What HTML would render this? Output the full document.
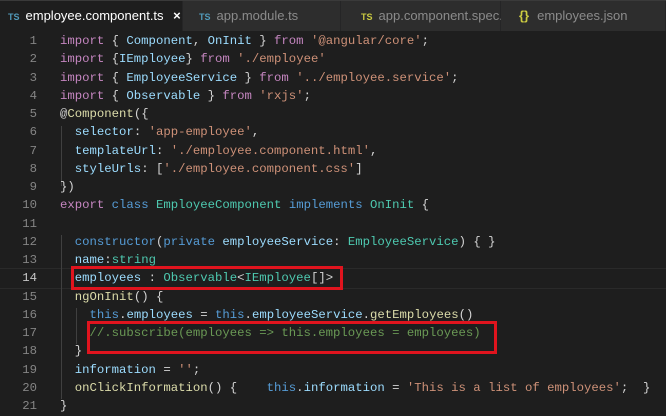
<!DOCTYPE html>
<html><head><meta charset="utf-8"><style>
body{margin:0;width:666px;height:416px;background:#1e1e1e;overflow:hidden;font-family:"Liberation Mono",monospace;}
.tabs{position:absolute;left:0;top:0;width:666px;height:31px;background:#252526;border-top:1px solid #3a3a3a;box-sizing:border-box;font-family:"Liberation Sans",sans-serif;font-size:13px;}
.tab{position:absolute;top:0;height:30px;line-height:30px;color:#8b8b8b;background:#2d2d2d;border-right:1px solid #252526;box-sizing:border-box;padding-left:8px;}
.tab.a{background:#1e1e1e;color:#fff;}
.ts{font-size:9px;font-weight:bold;color:#519aba;margin-right:6px;}
.code{position:absolute;left:0;top:34px;width:666px;}
.ln{position:absolute;left:0;width:37px;text-align:right;color:#858585;font-size:12.3px;}
.l{position:absolute;left:60px;white-space:pre;font-size:12.3px;color:#d4d4d4;}
.k{color:#569cd6}.c{color:#c586c0}.t{color:#4ec9b0}.s{color:#ce9178}.v{color:#9cdcfe}.f{color:#dcdcaa}.g{color:#6a9955}
.box{position:absolute;border:3px solid #e0141e;box-sizing:border-box;}
.guide{position:absolute;width:1px;background:#404040;}
</style></head><body>
<div class="tabs">
<div class="tab a" style="left:0;width:183px"><span class="ts">TS</span>employee.component.ts <span style="margin-left:6px;font-weight:bold">×</span></div>
<div class="tab" style="left:183px;width:158px;padding-left:16px"><span class="ts">TS</span>app.module.ts</div>
<div class="tab" style="left:341px;width:160px;padding-left:20px"><span class="ts" style="color:#cbcb41">TS</span>app.component.spec.ts</div>
<div class="tab" style="left:501px;width:165px;padding-left:18px"><span style="color:#cbcb41;font-weight:bold;margin-right:8px">{}</span>employees.json</div>
</div>
<div style="position:absolute;left:0;top:268px;width:666px;height:19px;border-top:1px solid #2a2a2a;border-bottom:1px solid #2a2a2a"></div>
<div class="guide" style="left:61px;top:126px;height:60px"></div>
<div class="guide" style="left:61px;top:235px;height:164px"></div>
<div class="guide" style="left:76px;top:308px;height:36px"></div>
<div class="code" id="c"></div>
<script>
var L=[
'<span class="c">import</span> { <span class="v">Component</span>, <span class="v">OnInit</span> } <span class="c">from</span> <span class="s">\'@angular/core\'</span>;',
'<span class="c">import</span> {<span class="v">IEmployee</span>} <span class="c">from</span> <span class="s">\'./employee\'</span>',
'<span class="c">import</span> { <span class="v">EmployeeService</span> } <span class="c">from</span> <span class="s">\'../employee.service\'</span>;',
'<span class="c">import</span> { <span class="v">Observable</span> } <span class="c">from</span> <span class="s">\'rxjs\'</span>;',
'@<span class="f">Component</span>({',
'  <span class="v">selector</span>: <span class="s">\'app-employee\'</span>,',
'  <span class="v">templateUrl</span>: <span class="s">\'./employee.component.html\'</span>,',
'  <span class="v">styleUrls</span>: [<span class="s">\'./employee.component.css\'</span>]',
'})',
'<span class="c">export</span> <span class="k">class</span> <span class="t">EmployeeComponent</span> <span class="k">implements</span> <span class="t">OnInit</span> {',
'',
'  <span class="k">constructor</span>(<span class="k">private</span> <span class="v">employeeService</span>: <span class="t">EmployeeService</span>) { }',
'  <span class="v">name</span>:<span class="t">string</span>',
'  <span class="v">employees</span> : <span class="t">Observable</span>&lt;<span class="t">IEmployee</span>[]&gt;',
'  <span class="f">ngOnInit</span>() {',
'    <span class="k">this</span>.<span class="v">employees</span> = <span class="k">this</span>.<span class="v">employeeService</span>.<span class="f">getEmployees</span>()',
'    <span class="g">//.subscribe(employees =&gt; this.employees = employees)</span>',
'  }',
'  <span class="v">information</span> = <span class="s">\'\'</span>;',
'  <span class="f">onClickInformation</span>() {    <span class="k">this</span>.<span class="v">information</span> = <span class="s">\'This is a list of employees\'</span>;  }',
'}'];
var h='';for(var i=0;i<L.length;i++){var y=i*18.25;h+='<div class="ln" style="top:'+y+'px;'+(i==13?'color:#c6c6c6':'')+'">'+(i+1)+'</div><div class="l" style="top:'+y+'px">'+L[i]+'</div>';}
document.getElementById('c').innerHTML=h;
</script>
<div class="box" style="left:71px;top:266px;width:272px;height:24px"></div>
<div class="box" style="left:87px;top:321px;width:410px;height:33px"></div>
</body></html>
